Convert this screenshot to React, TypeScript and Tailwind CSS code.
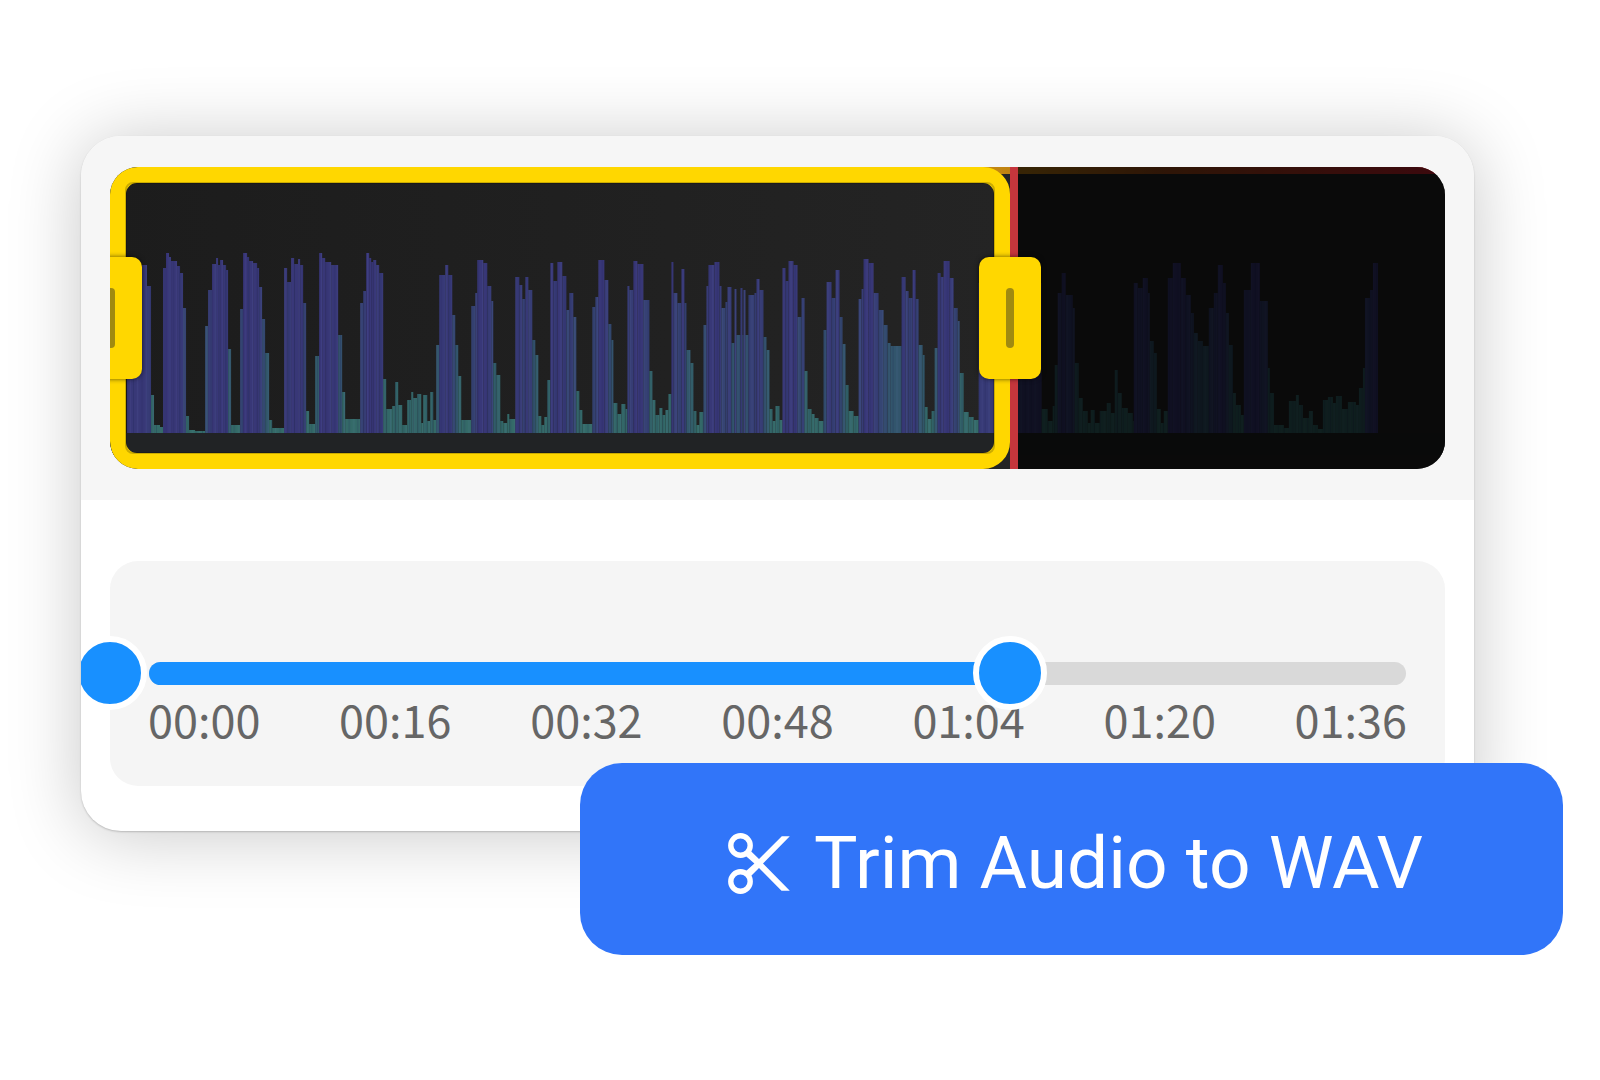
import { useState } from 'react';

const MARKS = ['00:00', '00:16', '00:32', '00:48', '01:04', '01:20', '01:36'];

const WAVE_WIDTH = 1334;
const WAVE_HEIGHT = 302;
const BASELINE = 266;

// Envelope of the recording: [start x, level] steps, each lasting until the next one.
const ENVELOPE: [number, number][] = [
  [17, 168], [37, 147], [41, 38], [44, 8], [50, 6], [53, 165], [56, 180], [59, 176], [61, 172], [67, 167], [70, 160],
  [73, 125], [76, 17], [79, 3], [85, 2], [95, 107], [98, 143], [102, 169], [106, 175], [108, 168], [110, 173],
  [113, 168], [116, 163], [118, 84], [121, 8], [130, 124], [133, 180], [137, 176], [139, 172], [143, 170], [147, 165],
  [149, 146], [152, 114], [155, 80], [159, 13], [162, 5], [174, 165], [177, 151], [181, 175], [184, 169], [188, 174],
  [190, 168], [193, 130], [196, 22], [199, 9], [205, 77], [209, 180], [212, 175], [215, 171], [221, 168], [228, 98],
  [232, 41], [235, 14], [250, 130], [253, 142], [256, 180], [259, 175], [261, 171], [263, 173], [266, 168], [269, 160],
  [273, 54], [276, 24], [282, 27], [285, 51], [288, 28], [292, 8], [297, 33], [301, 41], [303, 35], [307, 39],
  [311, 10], [313, 38], [317, 12], [320, 41], [323, 13], [326, 88], [329, 158], [335, 168], [338, 158], [342, 118],
  [345, 88], [348, 57], [351, 13], [361, 127], [365, 140], [367, 173], [373, 170], [377, 147], [381, 132], [383, 70],
  [386, 58], [390, 12], [393, 10], [397, 19], [399, 14], [405, 156], [409, 148], [412, 134], [415, 156], [418, 143],
  [422, 93], [425, 78], [428, 17], [431, 8], [434, 16], [437, 53], [440, 170], [443, 152], [447, 171], [452, 157],
  [456, 123], [459, 140], [463, 116], [466, 42], [469, 23], [472, 9], [482, 126], [485, 136], [488, 173], [494, 153],
  [498, 109], [501, 93], [503, 30], [507, 19], [511, 29], [515, 24], [517, 147], [519, 143], [523, 172], [527, 169],
  [533, 133], [539, 62], [542, 33], [545, 18], [549, 25], [552, 18], [555, 23], [558, 39], [561, 171], [563, 140],
  [567, 130], [571, 164], [574, 130], [576, 83], [580, 70], [583, 22], [586, 8], [589, 21], [593, 108], [596, 147],
  [598, 168], [604, 171], [609, 147], [611, 125], [615, 131], [617, 146], [621, 90], [624, 144], [626, 98], [630, 145],
  [632, 98], [633, 143], [635, 98], [638, 138], [644, 140], [646, 154], [649, 143], [653, 96], [656, 83], [659, 24],
  [662, 12], [665, 27], [669, 13], [672, 165], [675, 152], [678, 172], [683, 168], [687, 116], [691, 135], [694, 62],
  [697, 24], [701, 19], [704, 15], [708, 12], [713, 103], [716, 151], [721, 135], [725, 163], [729, 116], [732, 89],
  [735, 48], [738, 22], [743, 17], [748, 134], [751, 144], [753, 174], [758, 170], [763, 140], [768, 123], [773, 108],
  [777, 90], [780, 87], [791, 156], [795, 142], [798, 135], [802, 163], [805, 134], [808, 88], [812, 78], [814, 26],
  [817, 14], [821, 22], [824, 85], [827, 160], [830, 156], [833, 172], [839, 155], [843, 125], [847, 112], [849, 60],
  [853, 21], [858, 16], [863, 13], [868, 150], [931, 24], [937, 12], [942, 27], [944, 68], [947, 140], [951, 160],
  [955, 138], [962, 125], [964, 70], [968, 35], [972, 22], [977, 10], [980, 23], [984, 10], [989, 22], [996, 30],
  [1000, 20], [1004, 63], [1007, 40], [1011, 25], [1017, 20], [1022, 12], [1023, 150], [1027, 145], [1032, 155],
  [1037, 140], [1039, 92], [1043, 80], [1046, 24], [1050, 10], [1053, 22], [1057, 155], [1062, 170], [1070, 155],
  [1075, 138], [1080, 120], [1083, 100], [1087, 92], [1092, 87], [1098, 125], [1103, 140], [1107, 168], [1112, 150],
  [1115, 120], [1118, 88], [1122, 40], [1125, 28], [1130, 18], [1133, 143], [1140, 170], [1149, 132], [1157, 65],
  [1159, 40], [1163, 8], [1173, 5], [1178, 32], [1185, 38], [1188, 28], [1192, 15], [1198, 22], [1202, 8], [1207, 4],
  [1212, 33], [1217, 36], [1222, 30], [1225, 37], [1231, 24], [1237, 31], [1245, 28], [1248, 45], [1252, 65],
  [1254, 135], [1259, 143], [1262, 170], [1267, 0],
];

const STOPS: [number, number[]][] = [
  [0, [52, 108, 104]],
  [60, [50, 98, 104]],
  [90, [50, 84, 108]],
  [130, [54, 66, 116]],
  [150, [55, 58, 118]],
  [180, [56, 54, 120]],
];

function levelColor(level: number) {
  const i = Math.max(1, STOPS.findIndex(([at]) => at >= level));
  const [a, from] = STOPS[i - 1];
  const [b, to] = STOPS[i];
  const t = (level - a) / (b - a);
  return `rgb(${from.map((c, k) => Math.round(c + (to[k] - c) * t)).join(',')})`;
}

function Waveform() {
  return (
    <svg
      className="col-start-1 row-start-1 size-full"
      viewBox={`0 0 ${WAVE_WIDTH} ${WAVE_HEIGHT}`}
      preserveAspectRatio="none"
      aria-hidden="true"
    >
      <defs>
        <linearGradient id="backdrop" x1="0" x2="1" y1="0" y2="0">
          <stop offset="0" stopColor="#1c1c1c" />
          <stop offset="0.67" stopColor="#242424" />
          <stop offset="1" stopColor="#242424" />
        </linearGradient>
        <linearGradient id="peak" x1="0" x2="1" y1="0" y2="0">
          <stop offset="0" stopColor="#c89010" />
          <stop offset="0.4" stopColor="#a04c18" />
          <stop offset="1" stopColor="#d02030" />
        </linearGradient>
        <pattern id="stripes" width="23" height="10" patternUnits="userSpaceOnUse">
          <rect x="0" width="1" height="10" fill="#1a2050" opacity="0.24" />
          <rect x="4" width="1" height="10" fill="#6a78c0" opacity="0.14" />
          <rect x="8" width="2" height="10" fill="#1a2050" opacity="0.14" />
          <rect x="13" width="1" height="10" fill="#6a90c0" opacity="0.14" />
          <rect x="17" width="1" height="10" fill="#1a2050" opacity="0.26" />
          <rect x="20" width="1" height="10" fill="#6a78c0" opacity="0.1" />
        </pattern>
      </defs>
      <rect width={WAVE_WIDTH} height={WAVE_HEIGHT} fill="url(#backdrop)" />
      <rect y={BASELINE} width={WAVE_WIDTH} height="22" fill="#212325" />
      {ENVELOPE.slice(0, -1).map(([x, level], i) => {
        const width = ENVELOPE[i + 1][0] - x;
        return (
          <g key={x}>
            <rect x={x} y={BASELINE - level} width={width} height={level} fill={levelColor(level)} />
            <rect x={x} y={BASELINE - level} width={width} height={level} fill="url(#stripes)" />
          </g>
        );
      })}
      <rect x="860" width={WAVE_WIDTH - 860} height="7" fill="url(#peak)" />
      <rect x="901" width={WAVE_WIDTH - 901} height={WAVE_HEIGHT} fill="#000" opacity="0.71" />
    </svg>
  );
}

function Handle({ label }: { label: string }) {
  return (
    <button
      type="button"
      aria-label={label}
      className="absolute top-1/2 flex h-[122px] w-[62px] -translate-y-1/2 items-center justify-center rounded-[10px] bg-[#ffd700] shadow-[0_0_5px_rgba(0,0,0,0.6)] first:-left-[30px] last:-right-[31px]"
    >
      <span className="h-[60px] w-2 rounded-sm bg-[#a08a10]" />
    </button>
  );
}

const THUMB =
  'pointer-events-none col-start-1 row-start-1 -mx-[37px] h-[74px] appearance-none bg-transparent outline-none [&::-webkit-slider-thumb]:pointer-events-auto [&::-webkit-slider-thumb]:size-[74px] [&::-webkit-slider-thumb]:cursor-pointer [&::-webkit-slider-thumb]:appearance-none [&::-webkit-slider-thumb]:rounded-full [&::-webkit-slider-thumb]:border-[6px] [&::-webkit-slider-thumb]:border-white [&::-webkit-slider-thumb]:bg-[#1890ff]';

export default function App() {
  const [start, setStart] = useState(0);
  const [end, setEnd] = useState(67.4);

  return (
    <main className="min-h-screen overflow-hidden bg-white pt-[136px]">
      <section
        aria-label="Audio trimmer"
        className="mr-[126px] ml-[81px] overflow-hidden rounded-[40px] bg-white pb-[45px] shadow-[0_4px_72px_rgba(0,0,0,0.22),0_1px_2px_rgba(0,0,0,0.2)]"
      >
        <div className="bg-[#f6f6f6] px-[29px] py-[31px]">
          <div className="relative grid h-[302px] overflow-hidden rounded-[28px]">
            <Waveform />
            <div className="absolute inset-y-0" style={{ left: `${start}%`, right: `${100 - end}%` }}>
              <div className="absolute inset-y-0 left-full w-2 bg-[#c5363c]" />
              <div className="absolute inset-0 rounded-[27px] border-[16px] border-[#ffd700]" />
              <div className="absolute inset-[15px] rounded-lg border-2 border-black/20" />
              <div className="absolute inset-0">
                <Handle label="Selection start" />
                <Handle label="Selection end" />
              </div>
            </div>
          </div>
        </div>

        <div className="mx-[29px] mt-[61px] h-[225px] rounded-[28px] bg-[#f5f5f5] pt-[75px]">
          <div className="relative z-10 grid items-center">
            <div className="col-start-1 row-start-1 mx-[39px] h-[23px] overflow-hidden rounded-full bg-[#d9d9d9]">
              <div className="h-full bg-[#1890ff]" style={{ width: `${end + 1}%` }} />
            </div>
            <input
              type="range"
              aria-label="Start time"
              min={0}
              max={100}
              step={0.1}
              value={start}
              onChange={(e) => setStart(Math.min(Number(e.target.value), end))}
              className={THUMB}
            />
            <input
              type="range"
              aria-label="End time"
              min={0}
              max={100}
              step={0.1}
              value={end}
              onChange={(e) => setEnd(Math.max(Number(e.target.value), start))}
              className={THUMB}
            />
          </div>
          <div className="mx-[38px] -mt-[15px] flex justify-between font-['Noto_Sans_CJK_SC',sans-serif] text-[45px] leading-[48px] text-[#666666]">
            {MARKS.map((mark) => (
              <span key={mark}>{mark}</span>
            ))}
          </div>
        </div>
      </section>

      <div className="relative z-20 -mt-[68px] mr-[37px] ml-[36.25%] flex">
        <button
          type="button"
          className="flex h-[192px] grow items-center justify-center gap-6 rounded-[42px] bg-[#3175f9] pt-2 pl-2 font-['Roboto',sans-serif] text-[73px] leading-none font-[450] text-white"
        >
          <svg viewBox="0 0 62 61" className="h-[61px] w-[62px] shrink-0" fill="none" stroke="currentColor" aria-hidden="true">
            <circle cx="12.5" cy="12.5" r="9.7" strokeWidth="5.4" />
            <circle cx="12.5" cy="48.5" r="9.7" strokeWidth="5.4" />
            <path
              d="M17.5 22.8 L22.5 17.8 L31 26 L53.8 3.3 H61.8 L35 30.5 L61.8 57.8 H53.5 L31 35 L22.5 43.4 L17.5 38.4 L26.4 30.4 Z"
              fill="currentColor"
              stroke="none"
            />
          </svg>
          <span className="whitespace-nowrap">Trim Audio to WAV</span>
        </button>
      </div>
    </main>
  );
}
